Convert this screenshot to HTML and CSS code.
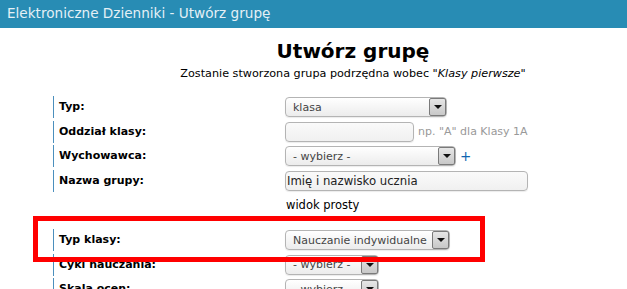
FILE: index.html
```html
<html>
  <head>
    <meta charset="utf-8" />
    <link rel="stylesheet" href="styles.css">
  </head>
  <body>
    <div class="topbar">Elektroniczne Dzienniki - Utwórz grupę</div>
    <div class="page">
      <h1 class="title">Utwórz grupę</h1>
      <p class="subtitle">Zostanie stworzona grupa podrzędna wobec "<em>Klasy pierwsze</em>"</p>

      <div class="form">
        <div class="label">Typ:</div>
        <div class="field">
          <div class="select w-typ"><span class="value">klasa</span><span class="arrow"></span></div>
        </div>

        <div class="label">Oddział klasy:</div>
        <div class="field">
          <div class="input w-oddzial"></div>
          <span class="hint">np. "A" dla Klasy 1A</span>
        </div>

        <div class="label">Wychowawca:</div>
        <div class="field">
          <div class="select w-wych"><span class="value">- wybierz -</span><span class="arrow"></span></div>
          <span class="plus">+</span>
        </div>

        <div class="label">Nazwa grupy:</div>
        <div class="field">
          <div class="input w-nazwa"><span class="value dark">Imię i nazwisko ucznia</span></div>
        </div>

        <div class="empty"></div>
        <div class="field plain">widok prosty</div>

        <div class="spacer"></div>

        <div class="label">Typ klasy:</div>
        <div class="field">
          <div class="select w-typklasy"><span class="value">Nauczanie indywidualne</span><span class="arrow"></span></div>
        </div>

        <div class="label">Cyki nauczania:</div>
        <div class="field">
          <div class="select w-small"><span class="value">- wybierz -</span><span class="arrow"></span></div>
        </div>

        <div class="label">Skala ocen:</div>
        <div class="field">
          <div class="select w-small"><span class="value">- wybierz -</span><span class="arrow"></span></div>
        </div>
      </div>
    </div>
    <div class="highlight"></div>
  </body>
</html>
```

FILE: styles.css
```css
body {
  margin: 0;
  font-family: "DejaVu Sans", Verdana, sans-serif;
  font-size: 11px;
  color: #000;
  background: #fff;
  overflow: hidden;
}

.topbar {
  height: 28px;
  line-height: 26px;
  padding-left: 7px;
  background: #288cb4;
  color: #e4f0f6;
  font-size: 13.6px;
}

.page {
  margin-left: 53px;
  width: 600px;
}

.title {
  margin: 10px 0 0;
  text-align: center;
  font-size: 20px;
  line-height: 26px;
}

.subtitle {
  margin: 2px 0 0;
  text-align: center;
  font-size: 11.2px;
  line-height: 15px;
}

.form {
  display: grid;
  grid-template-columns: 232px 1fr;
  row-gap: 2.5px;
  margin-top: 15px;
}

.label,
.field,
.empty {
  height: 22px;
}

.label {
  border-left: 1px solid #4b8fbd;
  padding-left: 5px;
  font-weight: bold;
  font-size: 11px;
  line-height: 22px;
  white-space: nowrap;
}

.field {
  display: flex;
  align-items: center;
}

.plain {
  padding-left: 1px;
  font-size: 11.5px;
}

.spacer {
  grid-column: 1 / 3;
  height: 8px;
}

.select,
.input {
  box-sizing: border-box;
  display: flex;
  align-items: center;
  height: 20px;
  border: 1px solid #b4b4b4;
  border-radius: 4px;
  background: linear-gradient(#ffffff, #ececec);
  box-shadow: 0 1px 1px rgba(0, 0, 0, 0.08);
}

.input {
  background: linear-gradient(#fafafa, #f0f0f0);
}

.value {
  flex: 1;
  padding-left: 7px;
  color: #444;
  font-size: 11px;
  white-space: nowrap;
  overflow: hidden;
}

.value.dark {
  padding-left: 1px;
  color: #222;
  font-size: 11.7px;
}

.arrow {
  position: relative;
  box-sizing: border-box;
  width: 17px;
  height: 18px;
  border: 1px solid #7a7a7a;
  border-radius: 2px;
  background: linear-gradient(#e6e6e6, #c8c8c8);
}

.arrow::after {
  content: "";
  position: absolute;
  left: 4px;
  top: 6px;
  border-left: 4px solid transparent;
  border-right: 4px solid transparent;
  border-top: 4px solid #111;
}

.w-typ { width: 162px; }
.w-oddzial { width: 129px; }
.w-wych { width: 171px; }
.w-nazwa { width: 243px; }
.w-typklasy { width: 165px; }
.w-small { width: 94px; }

.hint {
  margin-left: 4px;
  color: #999;
  font-size: 11px;
}

.plus {
  margin-left: 4px;
  color: #0f64b0;
  font-size: 13.5px;
}

.highlight {
  position: absolute;
  left: 33px;
  top: 216px;
  width: 442px;
  height: 36px;
  border: 5px solid #ff0000;
}
```
